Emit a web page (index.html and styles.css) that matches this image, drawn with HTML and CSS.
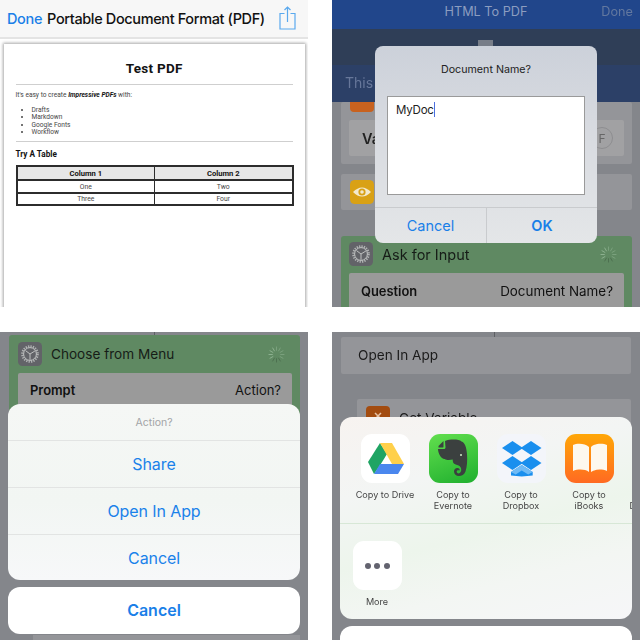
FILE: index.html
```html
<!DOCTYPE html>
<html lang="en">
<head>
  <meta charset="UTF-8">
  <meta name="viewport" content="width=device-width, initial-scale=1.0">
  <title>HTML To PDF</title>
  <link rel="stylesheet" href="styles.css">
</head>
<body>

<svg class="defs" width="0" height="0" aria-hidden="true">
  <symbol id="gear" viewBox="0 0 24 24">
    <rect width="24" height="24" rx="4.5" fill="#626368"/>
    <circle cx="12" cy="12" r="7.6" fill="none" stroke="#b0b2b3" stroke-width="2.4" stroke-dasharray="1.3 1.1"/>
    <circle cx="12" cy="12" r="6.4" fill="none" stroke="#bfc1c1" stroke-width="1"/>
    <path d="M12 12 7.500 8.600M12 12l4.900-3M12 12v5.800" stroke="#bfc1c1" stroke-width="1" fill="none"/>
  </symbol>
  <symbol id="spinner" viewBox="0 0 18 18">
    <g stroke="#8fb392" stroke-width="1" stroke-linecap="round">
      <path d="M9 1v3.600M13 2.100l-1.800 3.100M15.900 5l-3.100 1.800M17 9h-3.600M15.900 13l-3.100-1.800" opacity=".6"/>
      <path d="M13 15.900l-1.800-3.100M9 17v-3.600M5 15.900l1.800-3.100" stroke="#4c6e4f"/>
      <path d="M2.100 13l3.100-1.800M1 9h3.600M2.100 5l3.100 1.800M5 2.100l1.800 3.100"/>
    </g>
  </symbol>
</svg>

<main class="grid">

  <!-- pdf preview -->
  <section class="panel panel-preview">
    <header class="preview-bar">
      <span class="preview-done">Done</span>
      <span class="preview-title">Portable Document Format (PDF)</span>
      <svg class="share-icon" width="17" height="24" viewBox="0 0 17 24">
        <path d="M5.500 7.500H1v15.500h15V7.500h-4.500" fill="none" stroke="#5aa9ee" stroke-width="1.200"/>
        <path d="M8.500 16V1M5.500 4l3-3 3 3" fill="none" stroke="#5aa9ee" stroke-width="1.200"/>
      </svg>
    </header>
    <article class="doc">
      <h1>Test PDF</h1>
      <hr>
      <p>It's easy to create <b><i>Impressive PDFs</i></b> with:</p>
      <ul>
        <li>Drafts</li>
        <li>Markdown</li>
        <li>Google Fonts</li>
        <li>Workflow</li>
      </ul>
      <hr>
      <h2>Try A Table</h2>
      <table>
        <tr><th>Column 1</th><th>Column 2</th></tr>
        <tr><td>One</td><td>Two</td></tr>
        <tr><td>Three</td><td>Four</td></tr>
      </table>
    </article>
  </section>

  <!-- document name prompt -->
  <section class="panel panel-prompt">
    <header class="wf-nav">
      <span>HTML To PDF</span>
      <span class="wf-nav-done">Done</span>
    </header>
    <div class="wf-strip"><i class="wf-connector"></i></div>
    <div class="wf-note">This w</div>
    <div class="wf-actions">
      <div class="card card-variable">
        <div class="mini-icon mini-orange"></div>
        <div class="field"><b>Va</b><span class="field-circle">F</span></div>
      </div>
      <div class="card card-eye">
        <svg class="mini-icon" width="24" height="24" viewBox="0 0 24 24">
          <rect width="24" height="24" rx="4.500" fill="#d9a115"/>
          <path d="M3 12q9-9 18 0q-9 9-18 0z" fill="#f3e9cc"/>
          <circle cx="12" cy="12" r="3.600" fill="#d9a115"/>
          <circle cx="12" cy="12" r="1.800" fill="#f3e9cc"/>
        </svg>
      </div>
      <div class="card-green card-input">
        <div class="green-head">
          <svg width="24" height="24"><use href="#gear"/></svg>
          <span>Ask for Input</span>
          <svg class="spinner" width="17" height="17"><use href="#spinner"/></svg>
        </div>
        <div class="field field-green"><b>Question</b><span>Document Name?</span></div>
      </div>
    </div>

    <div class="dialog">
      <div class="dialog-title">Document Name?</div>
      <div class="dialog-input">MyDoc<i class="caret"></i></div>
      <div class="dialog-buttons">
        <span>Cancel</span>
        <span class="dialog-ok">OK</span>
      </div>
    </div>
  </section>

  <!-- action sheet -->
  <section class="panel panel-menu">
    <div class="wf-line wf-line-menu"></div>
    <div class="card-green card-menu">
      <div class="green-head">
        <svg width="24" height="24"><use href="#gear"/></svg>
        <span>Choose from Menu</span>
        <svg class="spinner" width="17" height="17"><use href="#spinner"/></svg>
      </div>
      <div class="field field-green"><b>Prompt</b><span>Action?</span></div>
    </div>
    <div class="peek-row"></div>

    <div class="sheet-stack">
      <div class="sheet">
        <div class="sheet-title">Action?</div>
        <div class="sheet-item">Share</div>
        <div class="sheet-item">Open In App</div>
        <div class="sheet-item">Cancel</div>
      </div>
      <div class="sheet-cancel">Cancel</div>
    </div>
  </section>

  <!-- share sheet -->
  <section class="panel panel-share">
    <div class="wf-line wf-line-share"></div>
    <div class="card card-open">Open In App</div>
    <div class="card card-get">
      <div class="mini-icon mini-orange-dark">
        <svg width="24" height="20" viewBox="0 0 24 20">
          <path d="M9 7l6 6M15 7l-6 6" stroke="#e6c3a6" stroke-width="1.500" fill="none"/>
        </svg>
      </div>
      <span>Get Variable</span>
    </div>

    <div class="share-stack">
      <div class="share-sheet">
        <div class="share-row">
          <div class="share-item">
            <div class="app-icon app-drive">
              <svg width="49" height="49" viewBox="0 0 49 49">
                <path d="M19 9 26 20 18 33 13 40 7 28z" fill="#1fa463"/>
                <path d="M19 9H31L43 30H31z" fill="#ffd04b"/>
                <path d="M19 30H43L37 40H13z" fill="#4a87ee"/>
              </svg>
            </div>
            <span>Copy to Drive</span>
          </div>
          <div class="share-item">
            <div class="app-icon app-evernote">
              <svg width="49" height="49" viewBox="0 0 49 49">
                <path d="M14.500 7 9.500 12V13.500h4c.8 0 1-.4 1-1z" fill="#3b403f"/>
                <path d="M16 7C21 5 30 5 32.500 7.500c3.500 1 5 6 5.500 12.500.5 7 0 13-1.500 17.500-1 3-4 4.500-6.500 4.500-3 0-5-2-5-4.500s2-4 4-3.500c1.500.3 2 1.500 1.500 2.500-1.500-.8-3 0-2.800 1.300.2 1.400 1.800 2 3 1.300 1.600-.9 2-3.500 1-5.500-1-1.800-3-2.500-5-3-2.500-.6-3-2.500-3-5-2 .5-6 1-8-.5C12 25 9 19 9 15h6c1 0 1.500-.7 1.500-1.500z" fill="#3b403f"/>
                <circle cx="32" cy="21" r="1" fill="#cfe9c8"/>
              </svg>
            </div>
            <span>Copy to<br>Evernote</span>
          </div>
          <div class="share-item">
            <div class="app-icon app-dropbox">
              <svg width="49" height="49" viewBox="0 0 49 49" fill="#1a8fee">
                <path d="M15.500 7 5 14l10.500 7L26 14zM34 7 23.500 14 34 21l10.500-7z"/>
                <path d="M15.500 22 5 29l10.500 7L26 29zM34 22l-10.500 7L34 36l10.500-7z"/>
                <path d="M24.700 31 14 38v3.500l10.700 1 11-1V38z"/>
                <path d="M14 38l10.700-7 11 7-4.500 2.500-6.500-4-6 4z" fill="#6fbaf5"/>
              </svg>
            </div>
            <span>Copy to<br>Dropbox</span>
          </div>
          <div class="share-item">
            <div class="app-icon app-books">
              <svg width="50" height="49" viewBox="0 0 50 49">
                <path d="M24 13C20 9 12 9 8 11v26c5-2 12-2 16 1z" fill="#fdf8ee"/>
                <path d="M26 13c4-4 12-4 16-2v26c-5-2-12-2-16 1z" fill="#fdf8ee"/>
              </svg>
            </div>
            <span>Copy to<br>iBooks</span>
          </div>
          <div class="share-item share-item-last">
            <div class="app-icon"></div>
            <span>Copy to<br>Documents</span>
          </div>
        </div>
        <div class="share-row share-row-more">
          <div class="share-item">
            <div class="app-icon app-more"><i></i><i></i><i></i></div>
            <span>More</span>
          </div>
        </div>
      </div>
      <div class="share-cancel"></div>
    </div>
  </section>

</main>

</body>
</html>
```

FILE: styles.css
```css
* {
  box-sizing: border-box;
}

body {
  margin: 0;
  background-color: white;
  font-family: Inter, 'Liberation Sans', sans-serif;
  color: #111;
}

.defs {
  display: block;
  height: 0;
}

.grid {
  display: grid;
  grid-template-columns: 308px 308px;
  grid-template-rows: 307px 308px;
  column-gap: 24px;
  row-gap: 25px;
  filter: blur(0.35px);
}

.panel {
  position: relative;
  overflow: hidden;
  background-color: #84868b;
}

/* pdf preview */

.panel-preview {
  background-color: white;
}

.preview-bar {
  display: flex;
  align-items: center;
  height: 39px;
  padding-left: 7px;
  background-color: #f7f7f7;
  border-bottom: 2px solid #e4e4e4;
}

.preview-done {
  color: #1a7fe8;
  font-size: 14.5px;
  font-weight: 500;
  letter-spacing: -0.35px;
}

.preview-title {
  margin-left: 5px;
  font-size: 14.5px;
  font-weight: 500;
  letter-spacing: -0.37px;
  white-space: nowrap;
}

.share-icon {
  margin-left: auto;
  margin-right: 12px;
  margin-top: -2px;
}

.doc {
  margin: 5px 3px 0 4px;
  height: 270px;
  padding: 16px 12px 0 11.5px;
  background-color: white;
  box-shadow: 0 0 3px 1px rgba(0, 0, 0, 0.35);
  font-family: Roboto, sans-serif;
  color: #444;
  opacity: 0.99;
}

.doc h1 {
  margin: 0;
  height: 17px;
  font-size: 13.5px;
  line-height: 17px;
  text-align: center;
  color: #111;
  letter-spacing: 0.3px;
}

.doc hr {
  height: 1px;
  margin: 7px 0 0;
  border: 0;
  background-color: #cfcfcf;
}

.doc p {
  margin: 6px 0 0;
  font-size: 6.6px;
  line-height: 8px;
}

.doc p b {
  color: #111;
}

.doc ul {
  margin: 8px 0 0;
  padding-left: 16px;
  font-size: 6.6px;
  line-height: 7.35px;
}

.doc ul + hr {
  margin-top: 5px;
}

.doc h2 {
  margin: 7px 0 0;
  font-size: 8.2px;
  line-height: 10px;
  color: #111;
}

.doc table {
  width: 278px;
  margin-top: 6px;
  border: 2px solid #2a2a2a;
  border-collapse: collapse;
  table-layout: fixed;
  font-size: 6.8px;
}

.doc th,
.doc td {
  padding: 0;
  border: 1px solid #2a2a2a;
  border-top-width: 2px;
  text-align: center;
  height: 12.4px;
}

.doc th {
  height: 14px;
  background-color: #e6e6e6;
  color: #111;
  font-size: 7.6px;
}

/* workflow behind the dialogs */

.wf-nav {
  position: relative;
  height: 29px;
  background-color: #21468b;
  color: #8c9dc0;
  font-size: 12.7px;
  line-height: 24px;
  text-align: center;
}

.wf-nav-done {
  position: absolute;
  right: 7px;
  top: 0;
  color: #63789f;
}

.wf-strip {
  height: 36px;
  padding-top: 11px;
  background-color: #2f3e57;
}

.wf-connector {
  display: block;
  width: 15px;
  height: 25px;
  margin-left: 146px;
  background-color: #777d88;
}

.wf-note {
  height: 37px;
  padding: 9px 0 0 13px;
  background-color: #2c4067;
  color: #67779a;
  font-size: 14px;
}

.wf-actions {
  padding: 0 8px 0 9px;
}

.card {
  background-color: #949599;
  border-radius: 2px;
}

.card-variable {
  height: 62px;
  padding: 0 8px;
}

.mini-icon {
  display: block;
  width: 24px;
  height: 24px;
  border-radius: 4px;
}

.mini-orange {
  height: 10px;
  margin-left: 1px;
  border-radius: 0 0 4px 4px;
  background-color: #c8621f;
}

.mini-orange-dark {
  height: 20px;
  border-radius: 4px 4px 0 0;
  background-color: #a34c10;
}

.field {
  display: flex;
  align-items: center;
  justify-content: space-between;
  padding: 0 11px 0 13px;
  background-color: #a1a1a3;
  border-radius: 2px;
  font-size: 14.5px;
  color: #111;
}

.field b {
  font-weight: 600;
}

.card-variable .field {
  height: 36px;
  margin-top: 8px;
  color: #222;
}

.field-circle {
  display: flex;
  justify-content: center;
  align-items: center;
  width: 22px;
  height: 22px;
  border: 1px solid #8d8d90;
  border-radius: 50%;
  font-size: 12px;
  color: #666;
}

.card-eye {
  height: 36px;
  margin-top: 10px;
  padding: 6px 9px;
}

.card-green {
  background-color: #5f8962;
  border-radius: 3px;
}

.card-input {
  height: 90px;
  margin-top: 26px;
  padding: 6px 8px 0;
}

.green-head {
  display: flex;
  align-items: center;
  gap: 9px;
  height: 24px;
  font-size: 14.5px;
  color: #161c17;
}

.green-head svg {
  flex: none;
}

.spinner {
  margin-left: auto;
  margin-right: 7px;
}

.field-green {
  height: 36px;
  margin-top: 7px;
  padding-left: 12px;
  background-color: #9a9a9a;
  font-size: 13.4px;
}

.field-green b {
  font-size: 12.9px;
}

.dialog {
  position: absolute;
  left: 43px;
  top: 46px;
  width: 222px;
  height: 197px;
  display: flex;
  flex-direction: column;
  border-radius: 8px;
  background: linear-gradient(#ccd1da, #d6d9df 35%, #e4e6e8);
}

.dialog-title {
  height: 50px;
  padding-top: 17px;
  font-size: 10.7px;
  line-height: 14px;
  text-align: center;
  color: #222;
}

.dialog-input {
  height: 99px;
  margin: 0 12px;
  padding: 5px 8px;
  background-color: white;
  border: 1px solid #9a9a9a;
  font-size: 11.5px;
  line-height: 17px;
  letter-spacing: -0.2px;
  color: #222;
}

.caret {
  display: inline-block;
  width: 1.5px;
  height: 15px;
  vertical-align: -3px;
  background-color: #4d6fe0;
}

.dialog-buttons {
  display: grid;
  grid-template-columns: 111px 111px;
  flex: 1;
  margin-top: 12px;
  border-top: 1px solid #c9cbce;
  font-size: 14.5px;
  color: #1a7fe8;
}

.dialog-buttons span {
  display: flex;
  align-items: center;
  justify-content: center;
}

.dialog-ok {
  border-left: 1px solid #c9cbce;
  font-weight: 600;
}

/* action sheet */

.wf-line {
  width: 1px;
  height: 3px;
  background-color: #5e6064;
}

.wf-line-menu {
  margin-left: 154px;
}

.card-menu {
  height: 100px;
  margin: 0 8px 0 9px;
  padding: 7px 8px 0 9px;
}

.card-menu .green-head {
  font-size: 13.6px;
}

.card-menu .field {
  height: 34px;
  margin-top: 7px;
  padding-right: 11px;
  padding-left: 12px;
  font-size: 13px;
}

.peek-row {
  width: 267px;
  height: 5px;
  margin: 200px 0 0 33px;
  background-color: #949599;
}

.sheet-stack {
  position: absolute;
  left: 8px;
  top: 72px;
  width: 292px;
  display: flex;
  flex-direction: column;
  gap: 7px;
}

.sheet {
  height: 176px;
  border-radius: 12px;
  background: linear-gradient(#f5f7f5, #f2f6f3 55%, #f7f8f9);
  overflow: hidden;
}

.sheet-title {
  height: 36px;
  font-size: 10.5px;
  line-height: 37px;
  text-align: center;
  color: #a2a4a6;
}

.sheet-item {
  height: 47px;
  border-top: 1px solid #e2e4e3;
  font-size: 16px;
  line-height: 47px;
  text-align: center;
  letter-spacing: -0.1px;
  color: #1a82ea;
}

.sheet-cancel {
  height: 47px;
  border-radius: 12px;
  background-color: white;
  font-size: 16px;
  font-weight: 600;
  line-height: 47px;
  text-align: center;
  color: #1a7fe8;
}

/* share sheet */

.wf-line-share {
  height: 5px;
  margin-left: 162px;
}

.card-open {
  height: 37px;
  margin: 0 9px;
  padding-left: 17px;
  font-size: 13.6px;
  line-height: 37px;
  color: #1b1b1b;
}

.card-get {
  display: flex;
  gap: 9px;
  height: 60px;
  margin: 25px 9px 0 25px;
  padding: 7px 9px;
  font-size: 13.6px;
  color: #1b1b1b;
}

.card-get span {
  line-height: 24px;
}

.share-stack {
  position: absolute;
  left: 8px;
  top: 85px;
  width: 292px;
  display: flex;
  flex-direction: column;
  gap: 7px;
}

.share-sheet {
  height: 202px;
  border-radius: 12px;
  overflow: hidden;
  background: linear-gradient(165deg, #f7f3f0, #f3f5f4 30%, #edf5ec 55%, #f3f6f3 75%, #f6f6f8);
}

.share-row {
  display: flex;
  height: 107px;
  padding: 17px 0 0 11px;
  border-bottom: 1px solid #d7e7d6;
}

.share-row-more {
  height: 95px;
  padding: 17px 0 0 0;
  border-bottom: 0;
}

.share-item {
  flex: none;
  width: 68px;
  display: flex;
  flex-direction: column;
  align-items: center;
  font-size: 9.1px;
  line-height: 10.5px;
  text-align: center;
  white-space: nowrap;
  color: #444;
}

.share-item span {
  margin-top: 7px;
}

.share-item-last {
  margin-left: -3px;
}

.share-row-more .share-item {
  margin-left: 3px;
}

.app-icon {
  flex: none;
  width: 49px;
  height: 49px;
  border-radius: 11px;
  overflow: hidden;
}

.app-drive,
.app-more {
  background-color: white;
}

.app-evernote {
  background: linear-gradient(160deg, #62df4e, #1faf2e);
}

.app-dropbox {
  background-color: #f3f5fa;
}

.app-books {
  background: linear-gradient(#ffa707, #ff6a22);
}

.app-more {
  display: flex;
  align-items: center;
  justify-content: center;
  gap: 3.5px;
}

.app-more i {
  width: 6px;
  height: 6px;
  border-radius: 50%;
  background-color: #63636f;
}

.share-cancel {
  height: 40px;
  border-radius: 12px;
  background-color: white;
}
```
